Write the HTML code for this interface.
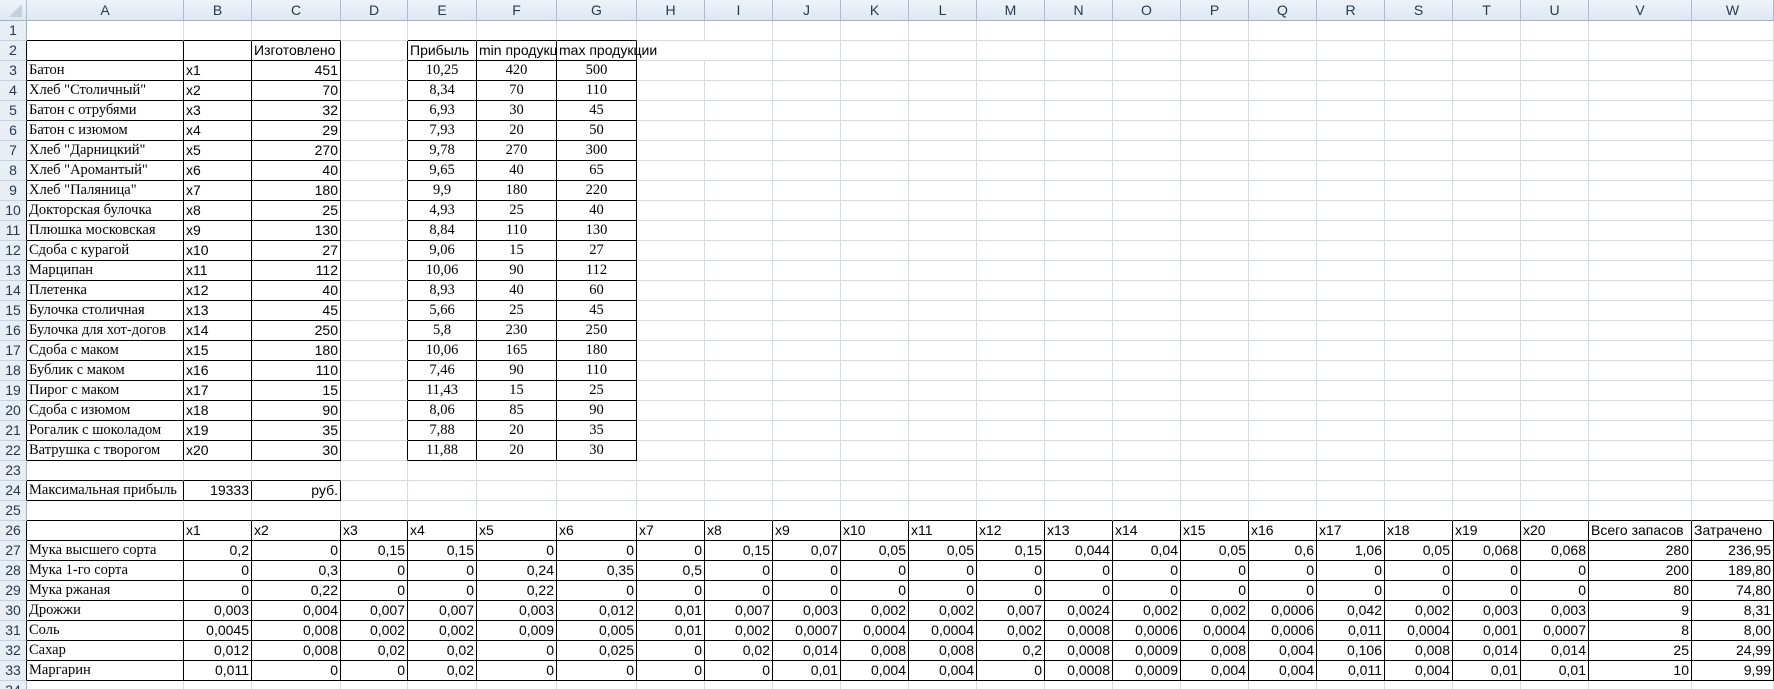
<!DOCTYPE html>
<html><head><meta charset="utf-8">
<style>
html,body{margin:0;padding:0;background:#fff;width:1774px;height:689px;overflow:hidden}
table{border-collapse:separate;border-spacing:0;table-layout:fixed;width:1774px;font-family:"Liberation Sans",sans-serif;font-size:14px;color:#000}
td{box-sizing:border-box;height:20px;padding:0 2px;border-right:1px solid #d4dbe6;border-bottom:1px solid #d4dbe6;white-space:nowrap;overflow:hidden;line-height:19px;vertical-align:bottom}
tr.hd td{height:21px;background:linear-gradient(#eef3f9,#dfe7f1);border-right:1px solid #a9bcd3;border-bottom:1px solid #9db3cc;text-align:center;color:#27384e;font-size:14px;vertical-align:middle}
td.h{background:#e8eef6;border-right:1px solid #9db3cc;border-bottom:1px solid #c5d2e2;text-align:center;color:#27384e;font-size:14px;padding:0}
td.r{border-right-color:#000}
td.b{border-bottom-color:#000}
td.rb{border-right-color:#000;border-bottom-color:#000}
.s{font-family:"Liberation Serif",serif;font-size:14.5px}
.n{text-align:right}
.c{text-align:center;font-family:"Liberation Serif",serif;font-size:14.5px}
.ov{overflow:visible}
</style></head><body>
<table>
<colgroup><col style="width:27px"><col style="width:157px"><col style="width:68px"><col style="width:89px"><col style="width:67px"><col style="width:69px"><col style="width:80px"><col style="width:80px">
<col style="width:68px"><col style="width:68px"><col style="width:68px"><col style="width:68px"><col style="width:68px"><col style="width:68px"><col style="width:68px"><col style="width:68px"><col style="width:68px"><col style="width:68px"><col style="width:68px"><col style="width:68px"><col style="width:68px"><col style="width:68px">
<col style="width:103px"><col style="width:82px"></colgroup>
<tr class="hd"><td style="position:relative"><svg width="26" height="20" style="position:absolute;left:0;top:0"><polygon points="22,4 22,17 9,17" fill="#c3cfdd"/></svg></td><td>A</td><td>B</td><td>C</td><td>D</td><td>E</td><td>F</td><td>G</td><td>H</td><td>I</td><td>J</td><td>K</td><td>L</td><td>M</td><td>N</td><td>O</td><td>P</td><td>Q</td><td>R</td><td>S</td><td>T</td><td>U</td><td>V</td><td>W</td></tr>
<tr><td class="h">1</td><td class="b"></td><td class="b"></td><td class="b"></td><td></td><td class="b"></td><td class="b"></td><td class="b"></td><td></td><td></td><td></td><td></td><td></td><td></td><td></td><td></td><td></td><td></td><td></td><td></td><td></td><td></td><td></td><td></td></tr>
<tr><td class="h r">2</td><td class="rb"></td><td class="rb"></td><td class="rb">Изготовлено</td><td class="r"></td><td class="rb">Прибыль</td><td class="rb">min продукции</td><td class="rb ov">max продукции</td><td style="border-right-color:#fff"></td><td></td><td></td><td></td><td></td><td></td><td></td><td></td><td></td><td></td><td></td><td></td><td></td><td></td><td></td><td></td></tr>
<tr><td class="h r">3</td><td class="rb s">Батон</td><td class="rb">x1</td><td class="rb n">451</td><td class="r"></td><td class="rb c">10,25</td><td class="rb c">420</td><td class="rb c">500</td><td></td><td></td><td></td><td></td><td></td><td></td><td></td><td></td><td></td><td></td><td></td><td></td><td></td><td></td><td></td><td></td></tr>
<tr><td class="h r">4</td><td class="rb s">Хлеб "Столичный"</td><td class="rb">x2</td><td class="rb n">70</td><td class="r"></td><td class="rb c">8,34</td><td class="rb c">70</td><td class="rb c">110</td><td></td><td></td><td></td><td></td><td></td><td></td><td></td><td></td><td></td><td></td><td></td><td></td><td></td><td></td><td></td><td></td></tr>
<tr><td class="h r">5</td><td class="rb s">Батон с отрубями</td><td class="rb">x3</td><td class="rb n">32</td><td class="r"></td><td class="rb c">6,93</td><td class="rb c">30</td><td class="rb c">45</td><td></td><td></td><td></td><td></td><td></td><td></td><td></td><td></td><td></td><td></td><td></td><td></td><td></td><td></td><td></td><td></td></tr>
<tr><td class="h r">6</td><td class="rb s">Батон с изюмом</td><td class="rb">x4</td><td class="rb n">29</td><td class="r"></td><td class="rb c">7,93</td><td class="rb c">20</td><td class="rb c">50</td><td></td><td></td><td></td><td></td><td></td><td></td><td></td><td></td><td></td><td></td><td></td><td></td><td></td><td></td><td></td><td></td></tr>
<tr><td class="h r">7</td><td class="rb s">Хлеб "Дарницкий"</td><td class="rb">x5</td><td class="rb n">270</td><td class="r"></td><td class="rb c">9,78</td><td class="rb c">270</td><td class="rb c">300</td><td></td><td></td><td></td><td></td><td></td><td></td><td></td><td></td><td></td><td></td><td></td><td></td><td></td><td></td><td></td><td></td></tr>
<tr><td class="h r">8</td><td class="rb s">Хлеб "Аромантый"</td><td class="rb">x6</td><td class="rb n">40</td><td class="r"></td><td class="rb c">9,65</td><td class="rb c">40</td><td class="rb c">65</td><td></td><td></td><td></td><td></td><td></td><td></td><td></td><td></td><td></td><td></td><td></td><td></td><td></td><td></td><td></td><td></td></tr>
<tr><td class="h r">9</td><td class="rb s">Хлеб "Паляница"</td><td class="rb">x7</td><td class="rb n">180</td><td class="r"></td><td class="rb c">9,9</td><td class="rb c">180</td><td class="rb c">220</td><td></td><td></td><td></td><td></td><td></td><td></td><td></td><td></td><td></td><td></td><td></td><td></td><td></td><td></td><td></td><td></td></tr>
<tr><td class="h r">10</td><td class="rb s">Докторская булочка</td><td class="rb">x8</td><td class="rb n">25</td><td class="r"></td><td class="rb c">4,93</td><td class="rb c">25</td><td class="rb c">40</td><td></td><td></td><td></td><td></td><td></td><td></td><td></td><td></td><td></td><td></td><td></td><td></td><td></td><td></td><td></td><td></td></tr>
<tr><td class="h r">11</td><td class="rb s">Плюшка московская</td><td class="rb">x9</td><td class="rb n">130</td><td class="r"></td><td class="rb c">8,84</td><td class="rb c">110</td><td class="rb c">130</td><td></td><td></td><td></td><td></td><td></td><td></td><td></td><td></td><td></td><td></td><td></td><td></td><td></td><td></td><td></td><td></td></tr>
<tr><td class="h r">12</td><td class="rb s">Сдоба с курагой</td><td class="rb">x10</td><td class="rb n">27</td><td class="r"></td><td class="rb c">9,06</td><td class="rb c">15</td><td class="rb c">27</td><td></td><td></td><td></td><td></td><td></td><td></td><td></td><td></td><td></td><td></td><td></td><td></td><td></td><td></td><td></td><td></td></tr>
<tr><td class="h r">13</td><td class="rb s">Марципан</td><td class="rb">x11</td><td class="rb n">112</td><td class="r"></td><td class="rb c">10,06</td><td class="rb c">90</td><td class="rb c">112</td><td></td><td></td><td></td><td></td><td></td><td></td><td></td><td></td><td></td><td></td><td></td><td></td><td></td><td></td><td></td><td></td></tr>
<tr><td class="h r">14</td><td class="rb s">Плетенка</td><td class="rb">x12</td><td class="rb n">40</td><td class="r"></td><td class="rb c">8,93</td><td class="rb c">40</td><td class="rb c">60</td><td></td><td></td><td></td><td></td><td></td><td></td><td></td><td></td><td></td><td></td><td></td><td></td><td></td><td></td><td></td><td></td></tr>
<tr><td class="h r">15</td><td class="rb s">Булочка столичная</td><td class="rb">x13</td><td class="rb n">45</td><td class="r"></td><td class="rb c">5,66</td><td class="rb c">25</td><td class="rb c">45</td><td></td><td></td><td></td><td></td><td></td><td></td><td></td><td></td><td></td><td></td><td></td><td></td><td></td><td></td><td></td><td></td></tr>
<tr><td class="h r">16</td><td class="rb s">Булочка для хот-догов</td><td class="rb">x14</td><td class="rb n">250</td><td class="r"></td><td class="rb c">5,8</td><td class="rb c">230</td><td class="rb c">250</td><td></td><td></td><td></td><td></td><td></td><td></td><td></td><td></td><td></td><td></td><td></td><td></td><td></td><td></td><td></td><td></td></tr>
<tr><td class="h r">17</td><td class="rb s">Сдоба с маком</td><td class="rb">x15</td><td class="rb n">180</td><td class="r"></td><td class="rb c">10,06</td><td class="rb c">165</td><td class="rb c">180</td><td></td><td></td><td></td><td></td><td></td><td></td><td></td><td></td><td></td><td></td><td></td><td></td><td></td><td></td><td></td><td></td></tr>
<tr><td class="h r">18</td><td class="rb s">Бублик с маком</td><td class="rb">x16</td><td class="rb n">110</td><td class="r"></td><td class="rb c">7,46</td><td class="rb c">90</td><td class="rb c">110</td><td></td><td></td><td></td><td></td><td></td><td></td><td></td><td></td><td></td><td></td><td></td><td></td><td></td><td></td><td></td><td></td></tr>
<tr><td class="h r">19</td><td class="rb s">Пирог с маком</td><td class="rb">x17</td><td class="rb n">15</td><td class="r"></td><td class="rb c">11,43</td><td class="rb c">15</td><td class="rb c">25</td><td></td><td></td><td></td><td></td><td></td><td></td><td></td><td></td><td></td><td></td><td></td><td></td><td></td><td></td><td></td><td></td></tr>
<tr><td class="h r">20</td><td class="rb s">Сдоба с изюмом</td><td class="rb">x18</td><td class="rb n">90</td><td class="r"></td><td class="rb c">8,06</td><td class="rb c">85</td><td class="rb c">90</td><td></td><td></td><td></td><td></td><td></td><td></td><td></td><td></td><td></td><td></td><td></td><td></td><td></td><td></td><td></td><td></td></tr>
<tr><td class="h r">21</td><td class="rb s">Рогалик с шоколадом</td><td class="rb">x19</td><td class="rb n">35</td><td class="r"></td><td class="rb c">7,88</td><td class="rb c">20</td><td class="rb c">35</td><td></td><td></td><td></td><td></td><td></td><td></td><td></td><td></td><td></td><td></td><td></td><td></td><td></td><td></td><td></td><td></td></tr>
<tr><td class="h r">22</td><td class="rb s">Ватрушка с творогом</td><td class="rb">x20</td><td class="rb n">30</td><td class="r"></td><td class="rb c">11,88</td><td class="rb c">20</td><td class="rb c">30</td><td></td><td></td><td></td><td></td><td></td><td></td><td></td><td></td><td></td><td></td><td></td><td></td><td></td><td></td><td></td><td></td></tr>
<tr><td class="h">23</td><td class="b"></td><td class="b"></td><td class="b"></td><td></td><td></td><td></td><td></td><td></td><td></td><td></td><td></td><td></td><td></td><td></td><td></td><td></td><td></td><td></td><td></td><td></td><td></td><td></td><td></td></tr>
<tr><td class="h r">24</td><td class="rb s">Максимальная прибыль</td><td class="rb n">19333</td><td class="rb n">руб.</td><td></td><td></td><td></td><td></td><td></td><td></td><td></td><td></td><td></td><td></td><td></td><td></td><td></td><td></td><td></td><td></td><td></td><td></td><td></td><td></td></tr>
<tr><td class="h">25</td><td class="b"></td><td class="b"></td><td class="b"></td><td class="b"></td><td class="b"></td><td class="b"></td><td class="b"></td><td class="b"></td><td class="b"></td><td class="b"></td><td class="b"></td><td class="b"></td><td class="b"></td><td class="b"></td><td class="b"></td><td class="b"></td><td class="b"></td><td class="b"></td><td class="b"></td><td class="b"></td><td class="b"></td><td class="b"></td><td class="b"></td></tr>
<tr><td class="h r">26</td><td class="rb"></td><td class="rb">x1</td><td class="rb">x2</td><td class="rb">x3</td><td class="rb">x4</td><td class="rb">x5</td><td class="rb">x6</td><td class="rb">x7</td><td class="rb">x8</td><td class="rb">x9</td><td class="rb">x10</td><td class="rb">x11</td><td class="rb">x12</td><td class="rb">x13</td><td class="rb">x14</td><td class="rb">x15</td><td class="rb">x16</td><td class="rb">x17</td><td class="rb">x18</td><td class="rb">x19</td><td class="rb">x20</td><td class="rb">Всего запасов</td><td class="rb">Затрачено</td></tr>
<tr><td class="h r">27</td><td class="rb s">Мука высшего сорта</td><td class="rb n">0,2</td><td class="rb n">0</td><td class="rb n">0,15</td><td class="rb n">0,15</td><td class="rb n">0</td><td class="rb n">0</td><td class="rb n">0</td><td class="rb n">0,15</td><td class="rb n">0,07</td><td class="rb n">0,05</td><td class="rb n">0,05</td><td class="rb n">0,15</td><td class="rb n">0,044</td><td class="rb n">0,04</td><td class="rb n">0,05</td><td class="rb n">0,6</td><td class="rb n">1,06</td><td class="rb n">0,05</td><td class="rb n">0,068</td><td class="rb n">0,068</td><td class="rb n">280</td><td class="rb n">236,95</td></tr>
<tr><td class="h r">28</td><td class="rb s">Мука 1-го сорта</td><td class="rb n">0</td><td class="rb n">0,3</td><td class="rb n">0</td><td class="rb n">0</td><td class="rb n">0,24</td><td class="rb n">0,35</td><td class="rb n">0,5</td><td class="rb n">0</td><td class="rb n">0</td><td class="rb n">0</td><td class="rb n">0</td><td class="rb n">0</td><td class="rb n">0</td><td class="rb n">0</td><td class="rb n">0</td><td class="rb n">0</td><td class="rb n">0</td><td class="rb n">0</td><td class="rb n">0</td><td class="rb n">0</td><td class="rb n">200</td><td class="rb n">189,80</td></tr>
<tr><td class="h r">29</td><td class="rb s">Мука ржаная</td><td class="rb n">0</td><td class="rb n">0,22</td><td class="rb n">0</td><td class="rb n">0</td><td class="rb n">0,22</td><td class="rb n">0</td><td class="rb n">0</td><td class="rb n">0</td><td class="rb n">0</td><td class="rb n">0</td><td class="rb n">0</td><td class="rb n">0</td><td class="rb n">0</td><td class="rb n">0</td><td class="rb n">0</td><td class="rb n">0</td><td class="rb n">0</td><td class="rb n">0</td><td class="rb n">0</td><td class="rb n">0</td><td class="rb n">80</td><td class="rb n">74,80</td></tr>
<tr><td class="h r">30</td><td class="rb s">Дрожжи</td><td class="rb n">0,003</td><td class="rb n">0,004</td><td class="rb n">0,007</td><td class="rb n">0,007</td><td class="rb n">0,003</td><td class="rb n">0,012</td><td class="rb n">0,01</td><td class="rb n">0,007</td><td class="rb n">0,003</td><td class="rb n">0,002</td><td class="rb n">0,002</td><td class="rb n">0,007</td><td class="rb n">0,0024</td><td class="rb n">0,002</td><td class="rb n">0,002</td><td class="rb n">0,0006</td><td class="rb n">0,042</td><td class="rb n">0,002</td><td class="rb n">0,003</td><td class="rb n">0,003</td><td class="rb n">9</td><td class="rb n">8,31</td></tr>
<tr><td class="h r">31</td><td class="rb s">Соль</td><td class="rb n">0,0045</td><td class="rb n">0,008</td><td class="rb n">0,002</td><td class="rb n">0,002</td><td class="rb n">0,009</td><td class="rb n">0,005</td><td class="rb n">0,01</td><td class="rb n">0,002</td><td class="rb n">0,0007</td><td class="rb n">0,0004</td><td class="rb n">0,0004</td><td class="rb n">0,002</td><td class="rb n">0,0008</td><td class="rb n">0,0006</td><td class="rb n">0,0004</td><td class="rb n">0,0006</td><td class="rb n">0,011</td><td class="rb n">0,0004</td><td class="rb n">0,001</td><td class="rb n">0,0007</td><td class="rb n">8</td><td class="rb n">8,00</td></tr>
<tr><td class="h r">32</td><td class="rb s">Сахар</td><td class="rb n">0,012</td><td class="rb n">0,008</td><td class="rb n">0,02</td><td class="rb n">0,02</td><td class="rb n">0</td><td class="rb n">0,025</td><td class="rb n">0</td><td class="rb n">0,02</td><td class="rb n">0,014</td><td class="rb n">0,008</td><td class="rb n">0,008</td><td class="rb n">0,2</td><td class="rb n">0,0008</td><td class="rb n">0,0009</td><td class="rb n">0,008</td><td class="rb n">0,004</td><td class="rb n">0,106</td><td class="rb n">0,008</td><td class="rb n">0,014</td><td class="rb n">0,014</td><td class="rb n">25</td><td class="rb n">24,99</td></tr>
<tr><td class="h r">33</td><td class="rb s">Маргарин</td><td class="rb n">0,011</td><td class="rb n">0</td><td class="rb n">0</td><td class="rb n">0,02</td><td class="rb n">0</td><td class="rb n">0</td><td class="rb n">0</td><td class="rb n">0</td><td class="rb n">0,01</td><td class="rb n">0,004</td><td class="rb n">0,004</td><td class="rb n">0</td><td class="rb n">0,0008</td><td class="rb n">0,0009</td><td class="rb n">0,004</td><td class="rb n">0,004</td><td class="rb n">0,011</td><td class="rb n">0,004</td><td class="rb n">0,01</td><td class="rb n">0,01</td><td class="rb n">10</td><td class="rb n">9,99</td></tr>
<tr><td class="h">34</td><td></td><td></td><td></td><td></td><td></td><td></td><td></td><td></td><td></td><td></td><td></td><td></td><td></td><td></td><td></td><td></td><td></td><td></td><td></td><td></td><td></td><td></td><td></td></tr>
</table>
</body></html>
